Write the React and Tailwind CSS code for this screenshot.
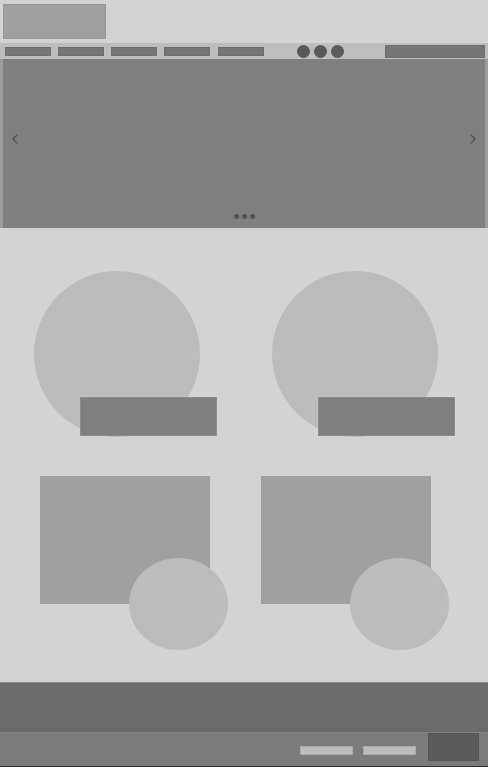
import { ChevronLeft, ChevronRight } from 'lucide-react';

const navItems = ['a', 'b', 'c', 'd', 'e'];

function TopCard() {
  return (
    <div className="relative h-[166px] w-[166px] shrink-0">
      <div className="h-full w-full rounded-full bg-[#bcbcbc]" />
      <div className="absolute left-[46px] top-[126px] h-[39px] w-[137px] border border-[#8c8c8c] bg-[#7f7f7f]" />
    </div>
  );
}

function BottomCard() {
  return (
    <div className="relative h-[128px] w-[170px] shrink-0">
      <div className="h-full w-full bg-[#a0a0a0]" />
      <div className="absolute left-[89px] top-[82px] h-[92px] w-[99px] rounded-[50%] bg-[#bcbcbc]" />
    </div>
  );
}

export default function App() {
  return (
    <div className="flex min-h-screen w-[488px] flex-col bg-[#d3d3d3]" style={{ fontFamily: '"Liberation Sans", sans-serif' }}>
      <header className="h-[43px] pl-[3px] pt-[4px]">
        <div className="h-[35px] w-[103px] border border-[#969696] bg-[#a0a0a0]" />
      </header>

      <nav className="flex h-[16px] items-center bg-[#bdbdbd] pl-[5px] pr-[3px]">
        <div className="flex gap-[7px]">
          {navItems.map((n, i) => (
            <div key={n} className={`h-[9px] w-[46px] border border-[#6e6e6e] bg-[#767676] ${i === 1 ? 'w-[45px]' : ''} ${i === 4 ? 'ml-[1px]' : ''}`} />
          ))}
        </div>
        <div className="ml-[33px] flex gap-[4px]">
          <span className="h-[13px] w-[13px] rounded-full bg-[#5a5a5a]" />
          <span className="h-[13px] w-[13px] rounded-full bg-[#5a5a5a]" />
          <span className="h-[13px] w-[13px] rounded-full bg-[#5a5a5a]" />
        </div>
        <div className="ml-auto h-[13px] w-[100px] border border-[#6e6e6e] bg-[#767676]" />
      </nav>

      <section className="flex h-[169px] bg-[#9c9c9c] pl-[3px] pr-[3px]">
        <div className="relative flex flex-1 items-center justify-between bg-[#7f7f7f] px-[4px]">
          <ChevronLeft className="-mt-[10px] h-[16px] w-[16px] text-[#4f4f4f]" strokeWidth={1.75} />
          <ChevronRight className="-mt-[10px] h-[16px] w-[16px] text-[#4f4f4f]" strokeWidth={1.75} />
          <div className="absolute bottom-[9px] left-[231px] flex gap-[3px]">
            <span className="h-[5px] w-[5px] rounded-full bg-[#555555]" />
            <span className="h-[5px] w-[5px] rounded-full bg-[#555555]" />
            <span className="h-[5px] w-[5px] rounded-full bg-[#555555]" />
          </div>
        </div>
      </section>

      <main className="flex h-[454px] flex-col pt-[43px]">
        <div className="flex gap-[72px] pl-[34px]">
          <TopCard />
          <TopCard />
        </div>
        <div className="mt-[39px] flex gap-[51px] pl-[40px]">
          <BottomCard />
          <BottomCard />
        </div>
      </main>

      <footer>
        <div className="h-[50px] border-t border-[#8a8a8a] bg-[#6b6b6b]" />
        <div className="flex h-[35px] items-start border-t border-[#828282] border-b border-b-[#333333] bg-[#7b7b7b] pl-[300px]">
          <div className="mt-[13px] flex gap-[10px]">
            <div className="h-[9px] w-[53px] border border-[#aaaaaa] bg-[#bcbcbc]" />
            <div className="h-[9px] w-[53px] border border-[#aaaaaa] bg-[#bcbcbc]" />
          </div>
          <div className="ml-[12px] h-[28px] w-[51px] border border-[#555555] bg-[#5a5a5a]" />
        </div>
      </footer>
    </div>
  );
}
